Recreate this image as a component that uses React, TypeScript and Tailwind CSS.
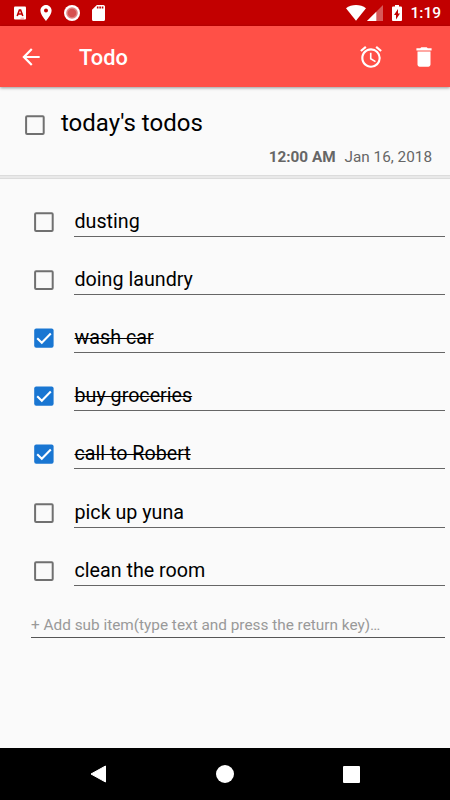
import { useState } from "react";

interface TodoItem {
  id: number;
  text: string;
  done: boolean;
}

const INITIAL_ITEMS: TodoItem[] = [
  { id: 1, text: "dusting", done: false },
  { id: 2, text: "doing laundry", done: false },
  { id: 3, text: "wash car", done: true },
  { id: 4, text: "buy groceries", done: true },
  { id: 5, text: "call to Robert", done: true },
  { id: 6, text: "pick up yuna", done: false },
  { id: 7, text: "clean the room", done: false },
];

function StatusBar() {
  return (
    <div className="flex h-[26px] shrink-0 items-center justify-between bg-[#c20000] pl-[14px] pr-[9px] text-white">
      <div className="flex items-center">
        <svg viewBox="0 0 12 14" className="h-[14px] w-3">
          <rect y="0.5" width="12" height="13" rx="1" fill="currentColor" />
          <path
            d="M3.2 10 5.4 4h1.2l2.2 6M4.2 8h3.6"
            fill="none"
            stroke="#c20000"
            strokeWidth="1.6"
          />
          <path d="M6.5 12.2h3.5" stroke="#e88" strokeWidth="0.8" />
        </svg>
        <svg viewBox="5 2 14 20" className="ml-[14px] h-4 w-3">
          <path
            fill="currentColor"
            d="M12 2C8.13 2 5 5.13 5 9c0 5.25 7 13 7 13s7-7.75 7-13c0-3.87-3.13-7-7-7zm0 9.5a2.5 2.5 0 0 1 0-5 2.5 2.5 0 0 1 0 5z"
          />
        </svg>
        <svg viewBox="0 0 16 16" className="ml-3 size-4">
          <circle cx="8" cy="8" r="8" fill="#fff" />
          <circle cx="8" cy="8" r="5.8" fill="#e08585" />
          <circle cx="8" cy="8" r="4.3" fill="#d65050" />
        </svg>
        <svg viewBox="4 2 16 20" className="ml-3 h-4 w-[13px]" preserveAspectRatio="none">
          <path
            fill="currentColor"
            d="M18 2h-8L4.02 8 4 20c0 1.1.9 2 2 2h12c1.1 0 2-.9 2-2V4c0-1.1-.9-2-2-2zm-6 4.5h-2V4h2v2.5zm3 0h-2V4h2v2.5zm3 0h-2V4h2v2.5z"
          />
        </svg>
      </div>
      <div className="flex items-center">
        <svg viewBox="0 0 20 16" className="h-4 w-5">
          <path fill="currentColor" d="M0 3.3C5.5-1 14.5-1 20 3.3L10 15.8z" />
        </svg>
        <svg viewBox="0 0 16 16" className="ml-[1px] h-4 w-4">
          <path fill="#fff" fillOpacity="0.35" d="M16 0v16H0z" />
          <path fill="currentColor" d="M9.3 6.7V16H0z" />
        </svg>
        <svg viewBox="7 2 10 20" className="ml-[9px] h-4 w-[10px]" preserveAspectRatio="none">
          <path
            fill="currentColor"
            d="M15.67 4H14V2h-4v2H8.33C7.6 4 7 4.6 7 5.33v15.33C7 21.4 7.6 22 8.33 22h7.33c.74 0 1.34-.6 1.34-1.33V5.33C17 4.6 16.4 4 15.67 4zM11 20v-5.5H9L13 7v5.5h2L11 20z"
          />
        </svg>
        <span className="ml-2 pt-[2px] text-[15.5px] font-medium leading-none">1:19</span>
      </div>
    </div>
  );
}

function Toolbar() {
  return (
    <header className="z-10 flex h-[61px] shrink-0 items-center bg-[#ff5047] pl-[18px] pr-[13px] text-white shadow-[0_1px_3px_rgba(0,0,0,0.4)]">
      <button aria-label="Back">
        <svg viewBox="0 0 24 24" className="size-[26px]">
          <path
            fill="currentColor"
            d="M20 11H7.83l5.59-5.59L12 4l-8 8 8 8 1.41-1.41L7.83 13H20v-2z"
          />
        </svg>
      </button>
      <h1 className="ml-[35px] flex-1 pt-[4px] text-[21.8px] font-medium">Todo</h1>
      <button aria-label="Reminder">
        <svg viewBox="0 0 24 24" className="size-[26px]">
          <path
            fill="currentColor"
            d="M22 5.72l-4.6-3.86-1.29 1.53 4.6 3.86L22 5.72zM7.88 3.39L6.6 1.86 2 5.71l1.29 1.53 4.59-3.85zM12.5 8H11v6l4.75 2.85.75-1.23-4-2.37V8zM12 4c-4.97 0-9 4.03-9 9s4.02 9 9 9a9 9 0 0 0 0-18zm0 16c-3.87 0-7-3.13-7-7s3.13-7 7-7 7 3.13 7 7-3.13 7-7 7z"
          />
        </svg>
      </button>
      <button aria-label="Delete" className="ml-[27px]">
        <svg viewBox="0 0 24 24" className="size-[26px]">
          <path
            fill="currentColor"
            d="M6 19c0 1.1.9 2 2 2h8c1.1 0 2-.9 2-2V7H6v12zM19 4h-3.5l-1-1h-5l-1 1H5v2h14V4z"
          />
        </svg>
      </button>
    </header>
  );
}

function Checkbox({ checked, onClick }: { checked: boolean; onClick: () => void }) {
  return (
    <button role="checkbox" aria-checked={checked} onClick={onClick} className="shrink-0">
      <svg viewBox="0 0 20 20" className="block size-5">
        {checked ? (
          <>
            <rect x="0.2" y="0.4" width="19.4" height="19.4" rx="2" fill="#1976d2" />
            <path
              d="M3.2 10.2 7.8 14.8 16.8 5.6"
              fill="none"
              stroke="#fff"
              strokeWidth="2.1"
            />
          </>
        ) : (
          <rect
            x="1.1"
            y="1.3"
            width="17.6"
            height="17.6"
            rx="1"
            fill="none"
            stroke="#707070"
            strokeWidth="2"
          />
        )}
      </svg>
    </button>
  );
}

export default function App() {
  const [items, setItems] = useState(INITIAL_ITEMS);
  const [allDone, setAllDone] = useState(false);

  const toggle = (id: number) =>
    setItems((prev) => prev.map((i) => (i.id === id ? { ...i, done: !i.done } : i)));

  return (
    <div className="flex h-[800px] w-[450px] flex-col overflow-hidden bg-[#fafafa] font-['Roboto',sans-serif]">
      <StatusBar />
      <Toolbar />

      <section className="h-[92px] shrink-0 border-b border-[#dcdcdc] bg-[#e9e9e9] pb-[2px]">
        <div className="h-full border-b border-[#dcdcdc] bg-[#fafafa] pt-[21px]">
          <div className="flex h-[30px] items-center pl-[25px]">
            <div className="flex pt-[3px]">
              <Checkbox checked={allDone} onClick={() => setAllDone(!allDone)} />
            </div>
            <h2 className="ml-4 text-[24px] leading-[30px] text-black">today's todos</h2>
          </div>
          <div className="mt-[9px] flex justify-end gap-[9px] pr-[18px] text-[15.3px] leading-5 text-[#666]">
            <span className="font-bold">12:00 AM</span>
            <span>Jan 16, 2018</span>
          </div>
        </div>
      </section>

      <main className="flex-1 pr-[5px]">
        <ul>
          {items.map((item) => (
            <li key={item.id} className="flex h-[58.1px] items-end pl-[34px]">
              <div className="flex pb-[5px]">
                <Checkbox checked={item.done} onClick={() => toggle(item.id)} />
              </div>
              <div className="ml-5 flex-1 border-b border-[#666] pb-[2px] pl-[0.5px] text-[19.7px] leading-6 text-black">
                <span className={item.done ? "line-through decoration-1" : undefined}>
                  {item.text}
                </span>
              </div>
            </li>
          ))}
        </ul>
        <div className="ml-[31px] mt-[29px] border-b border-[#555] pb-[1px] text-[15.35px] leading-[21px] text-[#999]">
          + Add sub item(type text and press the return key)…
        </div>
      </main>

      <nav className="flex h-[52px] shrink-0 items-center justify-between bg-black pl-[89px] pr-[90px]">
        <svg viewBox="0 0 18 18" className="size-[18px]">
          <path d="M2 9 16.5 1v16z" fill="#fff" stroke="#fff" strokeLinejoin="round" />
        </svg>
        <div className="size-[18px] rounded-full bg-white" />
        <div className="size-[17px] rounded-[1px] bg-white" />
      </nav>
    </div>
  );
}
